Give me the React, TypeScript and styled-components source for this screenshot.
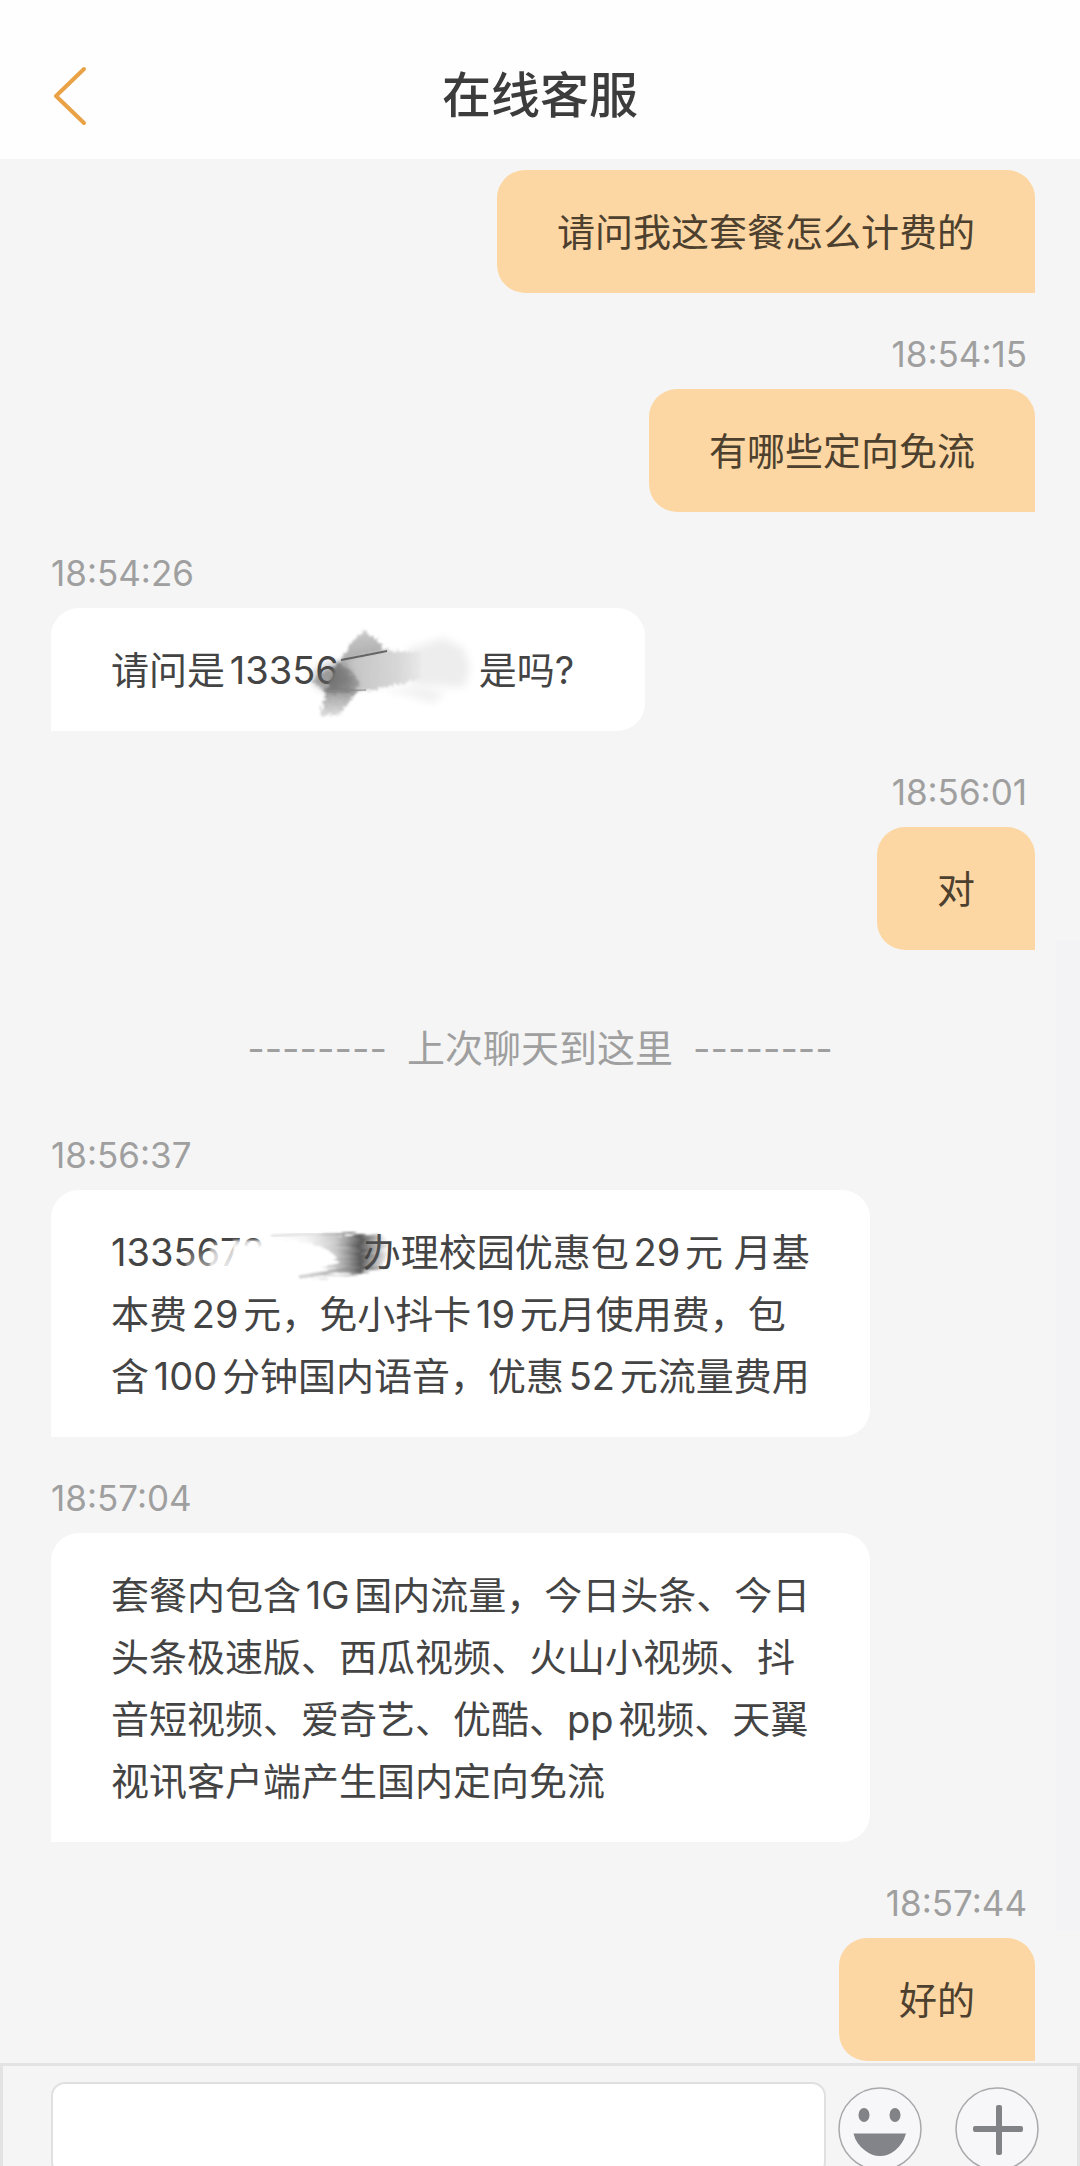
import React from "react";
import styled, { createGlobalStyle } from "styled-components";

const GlobalStyle = createGlobalStyle`
  *, *::before, *::after {
    box-sizing: border-box;
  }
  body {
    margin: 0;
    background: #f5f5f5;
    font-family: Inter, "Noto Sans CJK SC", sans-serif;
    color: #444444;
  }
`;

const Screen = styled.div`
  display: flex;
  flex-direction: column;
  height: 100vh;
  overflow: hidden;
`;

const Header = styled.header`
  display: grid;
  grid-template-columns: 1fr auto 1fr;
  align-items: center;
  flex: none;
  padding: 54px 48px 21px;
  background: #fefefe;
`;

const BackButton = styled.button`
  display: flex;
  justify-self: start;
  padding: 0;
  border: 0;
  background: none;
`;

const Title = styled.h1`
  margin: 0;
  font-size: 49px;
  line-height: 84px;
  font-weight: 500;
  color: #3c3c3c;
`;

const Conversation = styled.main`
  position: relative;
  display: flex;
  flex-direction: column;
  flex: 1;
  min-height: 0;
  padding: 11px 45px 0 51px;
  overflow: hidden;
`;

const ScrollTrack = styled.div`
  position: absolute;
  top: 41%;
  right: 0;
  bottom: 7%;
  width: 24px;
  background: #f3f2f5;
`;

const Message = styled.article<{ $mine?: boolean }>`
  display: flex;
  flex-direction: column;
  flex: none;
  align-items: ${(p) => (p.$mine ? "flex-end" : "flex-start")};
`;

const Time = styled.time`
  margin: 41px 8px 15px 0;
  font-size: 35px;
  line-height: 40px;
  color: #9f9f9f;
`;

const Bubble = styled.p<{ $mine?: boolean }>`
  max-width: 820px;
  margin: 0;
  padding: 31px 60px 30px;
  border-radius: ${(p) => (p.$mine ? "28px 28px 0 28px" : "28px 28px 28px 0")};
  background: ${(p) => (p.$mine ? "#fcd7a4" : "#ffffff")};
  color: ${(p) => (p.$mine ? "#4d402e" : "#444444")};
  font-size: 38px;
  line-height: 62px;
  white-space: nowrap;
  text-autospace: normal;
`;

const Question = styled.span`
  text-autospace: no-autospace;
`;

const Divider = styled.div`
  display: flex;
  flex: none;
  justify-content: center;
  gap: 20px;
  margin-left: -6px;
  padding: 67px 0 15px;
  font-size: 38px;
  line-height: 62px;
  color: #9f9f9f;
`;

const Redaction = styled.span<{ $width: number }>`
  position: relative;
  display: inline-block;
  width: ${(p) => p.$width}px;
  height: 38px;
  vertical-align: middle;
`;

const Smudge = styled.svg<{ $left: number; $top: number }>`
  position: absolute;
  left: ${(p) => p.$left}px;
  top: ${(p) => p.$top}px;
  pointer-events: none;
`;

const Composer = styled.form`
  display: flex;
  align-items: center;
  flex: none;
  height: 103px;
  padding: 16px 38px 0 48px;
  border: 3px solid #e3e3e4;
  border-bottom: 0;
  background: #f5f5f6;
`;

const TextBox = styled.input`
  flex: 1;
  align-self: flex-start;
  min-width: 0;
  height: 94px;
  margin-right: 12px;
  padding: 0 24px;
  border: 2px solid #e0e0e0;
  border-radius: 14px;
  background: #ffffff;
  font: inherit;
  font-size: 38px;
  outline: none;
`;

const RoundButton = styled.button`
  display: flex;
  align-self: flex-start;
  margin: 5px 0 0;
  padding: 0;
  border: 0;
  background: none;

  & + & {
    margin-left: 33px;
  }
`;

function GreySmudge() {
  return (
    <Smudge $left={-57} $top={-44} width="220" height="120" viewBox="0 0 220 120" aria-hidden="true">
      <defs>
        <filter id="rough" x="-10%" y="-10%" width="120%" height="120%">
          <feTurbulence type="fractalNoise" baseFrequency="0.4" numOctaves="2" seed="4" result="n" />
          <feDisplacementMap in="SourceGraphic" in2="n" scale="9" xChannelSelector="R" yChannelSelector="G" />
          <feGaussianBlur stdDeviation="1" />
        </filter>
        <filter id="haze" x="-20%" y="-20%" width="140%" height="140%">
          <feGaussianBlur stdDeviation="4" />
        </filter>
        <linearGradient id="band" x1="0" x2="1" y1="0" y2="0">
          <stop offset="0" stopColor="#8f8f8f" />
          <stop offset="0.3" stopColor="#c6c6c6" />
          <stop offset="0.75" stopColor="#d6d6d6" />
          <stop offset="1" stopColor="#e8e8e8" />
        </linearGradient>
        <linearGradient id="leaf" x1="0" x2="0.2" y1="0" y2="1">
          <stop offset="0" stopColor="#cccccc" />
          <stop offset="1" stopColor="#ababab" />
        </linearGradient>
        <linearGradient id="tail" x1="0" x2="0" y1="0" y2="1">
          <stop offset="0" stopColor="#999" />
          <stop offset="1" stopColor="#dddddd" />
        </linearGradient>
      </defs>
      <path d="M126 38L162 27L182 38L188 58L182 76L130 74Z" fill="#ededed" filter="url(#haze)" />
      <path d="M96 78L140 76L164 82L150 92L120 82Z" fill="#f0f0f0" filter="url(#haze)" />
      <g filter="url(#rough)">
        <path d="M57 51L70 31L82 20L95 29L105 43Z" fill="url(#leaf)" />
        <path d="M56 50L104 39L138 42L138 68L100 77L66 83L44 82Z" fill="url(#band)" />
        <path d="M42 78L77 78L68 90L57 104L38 105L42 90Z" fill="url(#tail)" />
        <path d="M36 64L56 52L68 58L78 74L66 82L46 82L30 72Z" fill="#666" opacity="0.4" />
      </g>
      <path d="M32 60L52 50L68 60L74 76L44 80L30 70Z" fill="#555" opacity="0.35" filter="url(#haze)" />
      <path d="M59 49Q80 45 105 40" stroke="#555" strokeWidth="2" fill="none" opacity="0.85" />
      <path d="M42 80L84 79" stroke="#888" strokeWidth="1" fill="none" />
    </Smudge>
  );
}

function FadedSmudge() {
  return (
    <Smudge $left={-174} $top={-33} width="340" height="100" viewBox="0 0 340 100" aria-hidden="true">
      <defs>
        <linearGradient id="wipeLight" x1="0" x2="0" y1="0" y2="1">
          <stop offset="0" stopColor="#fff" stopOpacity="0" />
          <stop offset="1" stopColor="#fff" stopOpacity="0.7" />
        </linearGradient>
        <linearGradient id="wipeStrong" x1="0" x2="0" y1="0" y2="1">
          <stop offset="0" stopColor="#fff" stopOpacity="0.2" />
          <stop offset="0.3" stopColor="#fff" stopOpacity="0.75" />
          <stop offset="1" stopColor="#fff" stopOpacity="0.95" />
        </linearGradient>
        <linearGradient id="wipeFull" x1="0" x2="0" y1="0" y2="1">
          <stop offset="0" stopColor="#fff" stopOpacity="0.7" />
          <stop offset="0.2" stopColor="#fff" stopOpacity="1" />
          <stop offset="1" stopColor="#fff" stopOpacity="1" />
        </linearGradient>
        <linearGradient id="ink" x1="180" y1="0" x2="298" y2="0" gradientUnits="userSpaceOnUse">
          <stop offset="0" stopColor="#777" stopOpacity="0" />
          <stop offset="0.3" stopColor="#777" stopOpacity="0.08" />
          <stop offset="0.55" stopColor="#666" stopOpacity="0.35" />
          <stop offset="0.76" stopColor="#3c3c3c" stopOpacity="0.85" />
          <stop offset="0.88" stopColor="#555" stopOpacity="0.5" />
          <stop offset="1" stopColor="#777" stopOpacity="0" />
        </linearGradient>
        <filter id="streak" x="-10%" y="-20%" width="120%" height="140%">
          <feTurbulence type="fractalNoise" baseFrequency="0.04 0.35" numOctaves="2" seed="7" result="n" />
          <feDisplacementMap in="SourceGraphic" in2="n" scale="14" xChannelSelector="R" yChannelSelector="R" />
          <feGaussianBlur stdDeviation="1" />
        </filter>
        <filter id="soft" x="-20%" y="-20%" width="140%" height="140%">
          <feGaussianBlur stdDeviation="1" />
        </filter>
      </defs>
      <g filter="url(#soft)">
        <path d="M95 42H121V74H95Z" fill="url(#wipeLight)" />
        <path d="M119 38H145V74H119Z" fill="url(#wipeStrong)" />
        <path d="M142 36H184V76H142Z" fill="url(#wipeFull)" />
      </g>
      <g filter="url(#streak)">
        <path d="M180 34Q200 30 225 30L280 30Q300 32 298 42L290 68Q250 68 208 78Q244 66 246 54Q236 38 180 34Z" fill="url(#ink)" />
      </g>
      <path d="M180 32Q220 29 250 30" stroke="#999" strokeWidth="2" fill="none" opacity="0.35" filter="url(#soft)" />
      <path d="M208 73Q238 69 266 62" stroke="#777" strokeWidth="3" fill="none" opacity="0.35" filter="url(#soft)" />
    </Smudge>
  );
}

export default function App() {
  return (
    <Screen lang="zh-CN">
      <GlobalStyle />
      <Header>
        <BackButton type="button" aria-label="返回">
          <svg width="44" height="64" viewBox="0 0 44 64" fill="none" aria-hidden="true">
            <path d="M36 5L8 32L36 59" stroke="#e9a245" strokeWidth="4" strokeLinecap="round" strokeLinejoin="round" />
          </svg>
        </BackButton>
        <Title>在线客服</Title>
      </Header>

      <Conversation>
        <ScrollTrack />
        <Message $mine>
          <Bubble $mine>请问我这套餐怎么计费的</Bubble>
        </Message>
        <Message $mine>
          <Time>18:54:15</Time>
          <Bubble $mine>有哪些定向免流</Bubble>
        </Message>
        <Message>
          <Time>18:54:26</Time>
          <Bubble>
            请问是13356
            <Redaction $width={140}>
              <GreySmudge />
            </Redaction>
            <Question>是吗?&nbsp;</Question>
          </Bubble>
        </Message>
        <Message $mine>
          <Time>18:56:01</Time>
          <Bubble $mine>对</Bubble>
        </Message>

        <Divider>
          <span aria-hidden="true">--------</span>
          <span>上次聊天到这里</span>
          <span aria-hidden="true">--------</span>
        </Divider>

        <Message>
          <Time>18:56:37</Time>
          <Bubble>
            1335672
            <Redaction $width={98}>
              <FadedSmudge />
            </Redaction>
            办理校园优惠包29元 月基
            <br />
            本费29元，免小抖卡19元月使用费，包
            <br />
            含100分钟国内语音，优惠52元流量费用
          </Bubble>
        </Message>
        <Message>
          <Time>18:57:04</Time>
          <Bubble>
            套餐内包含1G国内流量，今日头条、今日
            <br />
            头条极速版、西瓜视频、火山小视频、抖
            <br />
            音短视频、爱奇艺、优酷、pp视频、天翼
            <br />
            视讯客户端产生国内定向免流
          </Bubble>
        </Message>
        <Message $mine>
          <Time>18:57:44</Time>
          <Bubble $mine>好的</Bubble>
        </Message>
      </Conversation>

      <Composer onSubmit={(e) => e.preventDefault()}>
        <TextBox type="text" aria-label="输入消息" />
        <RoundButton type="button" aria-label="表情">
          <svg width="84" height="84" viewBox="0 0 84 84" aria-hidden="true">
            <circle cx="42" cy="42" r="41" fill="#f7f7f9" stroke="#a9a9ab" strokeWidth="1.5" />
            <ellipse cx="26" cy="28" rx="5.5" ry="7" fill="#828386" />
            <ellipse cx="57" cy="28" rx="5.5" ry="7" fill="#828386" />
            <path d="M15.500 46.500H68Q65 57 57 63.500Q50 69 42 69Q34 69 27 63.500Q18 57 15.500 46.500Z" fill="#828489" />
          </svg>
        </RoundButton>
        <RoundButton type="button" aria-label="更多">
          <svg width="84" height="84" viewBox="0 0 84 84" aria-hidden="true">
            <circle cx="42" cy="42" r="41" fill="#f7f7f9" stroke="#a9a9ab" strokeWidth="1.5" />
            <rect x="18" y="39" width="50" height="6" rx="2" fill="#828386" />
            <rect x="41" y="18" width="6" height="50" rx="2" fill="#828386" />
          </svg>
        </RoundButton>
      </Composer>
    </Screen>
  );
}
